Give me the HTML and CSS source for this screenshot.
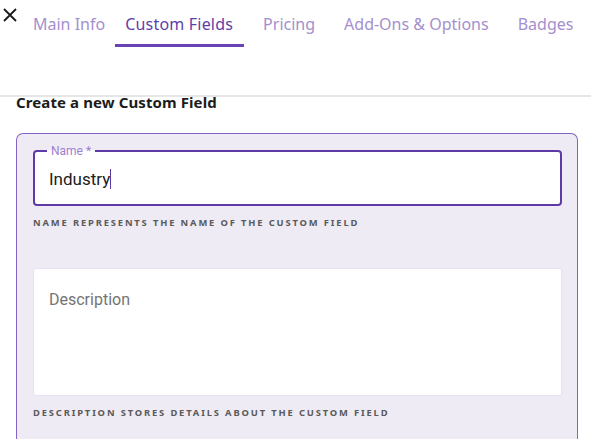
FILE: index.html
```html
<!DOCTYPE html>
<html lang="en">
<head>
  <meta charset="UTF-8">
  <title>Custom Fields</title>
  <link rel="stylesheet" href="styles.css">
</head>
<body>
  <div class="header">
    <button class="close-btn" aria-label="Close">
      <svg width="14" height="14" viewBox="0 0 14 14"><path d="M1 1 L13 13 M13 1 L1 13" stroke="#1a1a1a" stroke-width="1.8" fill="none"/></svg>
    </button>
    <nav class="tabs">
      <span class="tab">Main Info</span>
      <span class="tab active">Custom Fields</span>
      <span class="tab">Pricing</span>
      <span class="tab">Add-Ons &amp; Options</span>
      <span class="tab">Badges</span>
    </nav>
  </div>

  <div class="content">
    <h2 class="section-title">Create a new Custom Field</h2>
    <div class="field-card">
      <fieldset class="outlined focused">
        <legend>Name *</legend>
        <div class="field-value">Industry<span class="caret"></span></div>
      </fieldset>
      <div class="helper">Name represents the name of the custom field</div>

      <div class="textarea-box">
        <span class="placeholder">Description</span>
      </div>
      <div class="helper">Description stores details about the custom field</div>
    </div>
  </div>
</body>
</html>
```

FILE: styles.css
```css
* { margin: 0; padding: 0; box-sizing: border-box; }
body {
  font-family: "Noto Sans", "Open Sans", sans-serif;
  background-color: #fff;
  height: 100vh;
  overflow: hidden;
}
.header {
  height: 97px;
  display: flex;
  align-items: flex-start;
  border-bottom: 2px solid #e6e6e6;
  overflow: hidden;
}
.close-btn {
  flex-shrink: 0;
  width: 20px;
  height: 30px;
  border: none;
  background: transparent;
  display: flex;
  align-items: center;
  justify-content: center;
  cursor: pointer;
}
.tabs {
  display: flex;
  flex-shrink: 0;
  margin-left: 3px;
}
.tab {
  padding: 11px 10px 0;
  height: 47px;
  font-size: 16px;
  line-height: 26px;
  color: #a48fce;
  border-bottom: 3px solid transparent;
  margin-right: 9px;
  white-space: nowrap;
}
.tab:first-child {
  margin-right: 0;
}
.tab.active {
  color: #5f3ea8;
  border-bottom-color: #6a43b4;
  padding: 11px 11px 0 10px;
  letter-spacing: 0.2px;
}
.content {
  padding: 0 13px 0 16px;
}
.section-title {
  font-size: 15px;
  font-weight: 700;
  color: #1c1c1c;
  line-height: 18px;
  margin-top: -4px;
  letter-spacing: 0.1px;
}
.field-card {
  margin-top: 22px;
  background-color: #efebf4;
  border: 1px solid #8463c4;
  border-bottom: none;
  border-radius: 7px 7px 0 0;
  padding: 10px 15px 0 16px;
  height: 306px;
}
.outlined {
  border: 2px solid #5e3aa6;
  border-radius: 4px;
  background-color: #fff;
  height: 62px;
  padding: 0 14px;
}
.outlined legend {
  font-family: "Roboto", sans-serif;
  font-size: 12px;
  line-height: 14px;
  color: #9a80d2;
  padding: 0 4px;
  margin-left: -2px;
}
.field-value {
  font-family: "Roboto", sans-serif;
  font-size: 17px;
  color: #202020;
  line-height: 22px;
  margin-top: 10px;
}
.caret {
  display: inline-block;
  width: 1px;
  height: 20px;
  background-color: #5e3aa6;
  vertical-align: -4px;
}
.helper {
  font-family: "Noto Sans", sans-serif;
  font-size: 9.4px;
  font-weight: 700;
  letter-spacing: 1.85px;
  text-transform: uppercase;
  color: #5a5a5a;
  margin-top: 10px;
  line-height: 14px;
}
.textarea-box {
  margin-top: 38px;
  height: 128px;
  background-color: #fff;
  border: 1px solid #e6e1ee;
  border-radius: 3px;
  padding: 19px 15px;
}
.placeholder {
  font-family: "Roboto", sans-serif;
  font-size: 16px;
  color: #747474;
}
```
